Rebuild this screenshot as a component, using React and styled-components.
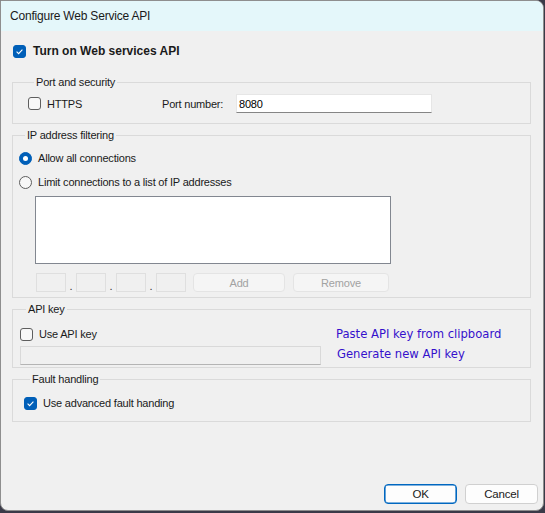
import React from "react";
import styled, { createGlobalStyle } from "styled-components";

const GlobalStyle = createGlobalStyle`
  html, body {
    margin: 0;
    padding: 0;
  }
  body {
    background: #3a3a48;
    font-family: "Liberation Sans", Arial, sans-serif;
    color: #1a1a1a;
  }
`;

const Window = styled.div`
  width: 544px;
  height: 511px;
  box-sizing: border-box;
  background: #f0f0f0;
  border: 1px solid #8e8e8e;
  border-radius: 0 8px 8px 8px;
  display: flex;
  flex-direction: column;
  overflow: hidden;
`;

const TitleBar = styled.div`
  height: 30px;
  flex: none;
  display: flex;
  align-items: center;
  padding-left: 9px;
  background: #e4f7fa;
  font-size: 12px;
  letter-spacing: -0.2px;
  color: #1a1a1a;
`;

const Body = styled.div`
  padding: 0 12px 0 11px;
  font-size: 11px;
  letter-spacing: -0.2px;
`;

const Row = styled.label`
  display: flex;
  align-items: center;
  height: 16px;
  gap: ${(p) => p.$gap || 6}px;
`;

const MasterRow = styled(Row)`
  margin-top: 12px;
  padding-left: 1px;
  font-size: 12px;
  font-weight: bold;
  letter-spacing: 0;
`;

const Group = styled.fieldset`
  margin: ${(p) => p.$top || 4}px 0 0;
  border: 1px solid #dadada;
  padding: ${(p) => p.$pad};
  min-width: 0;
`;

const Legend = styled.legend`
  padding: 0 2px;
  margin-left: 6px;
  font-size: 11px;
  line-height: 14px;
`;

const BoxMark = styled.span`
  width: 13px;
  height: 13px;
  box-sizing: border-box;
  border-radius: 3px;
  flex: none;
  display: inline-flex;
  align-items: center;
  justify-content: center;
  background: ${(p) => (p.$checked ? "#005fb8" : "#f7f7f7")};
  border: 1px solid ${(p) => (p.$checked ? "#005fb8" : "#5e5e5e")};
`;

const RadioMark = styled.span`
  width: 13px;
  height: 13px;
  box-sizing: border-box;
  border-radius: 50%;
  flex: none;
  display: inline-flex;
  align-items: center;
  justify-content: center;
  background: ${(p) => (p.$checked ? "#005fb8" : "#f7f7f7")};
  border: 1px solid ${(p) => (p.$checked ? "#005fb8" : "#5e5e5e")};

  &::after {
    content: "";
    display: ${(p) => (p.$checked ? "block" : "none")};
    width: 5px;
    height: 5px;
    border-radius: 50%;
    background: #fff;
  }
`;

const Check = ({ checked }) => (
  <BoxMark $checked={checked}>
    {checked && (
      <svg width="9" height="9" viewBox="0 0 9 9">
        <path d="M1.6 4.7 L3.6 6.6 L7.4 2.6" fill="none" stroke="#fff" strokeWidth="1.1" />
      </svg>
    )}
  </BoxMark>
);

const PortRow = styled.div`
  display: flex;
  align-items: center;
  height: 19px;
`;

const HttpsLabel = styled(Row)`
  width: 134px;
`;

const FieldLabel = styled.span`
  width: 74px;
`;

const TextInput = styled.div`
  box-sizing: border-box;
  width: ${(p) => p.$w}px;
  height: 19px;
  display: flex;
  align-items: center;
  padding-left: 2px;
  background: ${(p) => (p.$disabled ? "#f0f0f0" : "#fff")};
  border: 1px solid ${(p) => (p.$disabled ? "#d9d9d9" : "#e6e6e6")};
  border-bottom-color: ${(p) => (p.$disabled ? "#b4b4b4" : "#858585")};
  font-size: 11px;
  color: #000;
`;

const RadioList = styled.div`
  display: flex;
  flex-direction: column;
  gap: 8px;
`;

const ListBox = styled.div`
  box-sizing: border-box;
  width: 356px;
  height: 68px;
  margin: 6px 0 0 16px;
  background: #fff;
  border: 1px solid #828790;
`;

const IpRow = styled.div`
  display: flex;
  align-items: stretch;
  height: 19px;
  margin: 9px 0 0 17px;
`;

const IpBox = styled.div`
  box-sizing: border-box;
  width: 30px;
  background: #f0f0f0;
  border: 1px solid #dfdfdf;
`;

const IpDot = styled.span`
  width: 10px;
  display: flex;
  align-items: flex-end;
  justify-content: center;
  line-height: 12px;
  font-size: 11px;
  color: #333;
`;

const DimButton = styled.div`
  box-sizing: border-box;
  width: ${(p) => p.$w}px;
  margin-left: ${(p) => p.$ml}px;
  display: flex;
  align-items: center;
  justify-content: center;
  background: #f5f5f5;
  border: 1px solid #e4e4e4;
  border-radius: 4px;
  color: #a2a2a2;
`;

const KeyLayout = styled.div`
  display: flex;
  gap: 15px;
`;

const KeyLeft = styled.div`
  display: flex;
  flex-direction: column;
  gap: 4px;
`;

const LinkColumn = styled.div`
  display: flex;
  flex-direction: column;
  gap: 4px;
`;

const Link = styled.span`
  height: 16px;
  display: flex;
  align-items: center;
  margin-left: ${(p) => p.$ml || 0}px;
  font-family: "DejaVu Sans", Verdana, sans-serif;
  font-size: 11.6px;
  letter-spacing: 0;
  color: #3510cc;
  cursor: pointer;
`;

const Footer = styled.div`
  margin-top: auto;
  display: flex;
  justify-content: flex-end;
  gap: 8px;
  padding: 0 5px 6px 0;
`;

const Button = styled.button`
  box-sizing: border-box;
  width: 73px;
  height: 20px;
  padding: 0;
  border-radius: 4px;
  background: #fdfdfd;
  border: 1px solid ${(p) => (p.$primary ? "#0067c0" : "#d0d0d0")};
  box-shadow: ${(p) => (p.$primary ? "inset 0 0 0 0.6px #0067c0" : "none")};
  font-family: "Liberation Sans", Arial, sans-serif;
  font-size: 11.5px;
  letter-spacing: -0.2px;
  color: #1a1a1a;
`;

export default function App() {
  return (
    <>
      <GlobalStyle />
      <Window>
        <TitleBar>Configure Web Service API</TitleBar>
        <Body>
          <MasterRow $gap={7}>
            <Check checked />
            Turn on Web services API
          </MasterRow>

          <Group $top={16} $pad="5px 0 10px 15px">
            <Legend>Port and security</Legend>
            <PortRow>
              <HttpsLabel>
                <Check />
                HTTPS
              </HttpsLabel>
              <FieldLabel>Port number:</FieldLabel>
              <TextInput $w={196}>8080</TextInput>
            </PortRow>
          </Group>

          <Group $pad="8px 0 5px 6px">
            <Legend>IP address filtering</Legend>
            <RadioList>
              <Row>
                <RadioMark $checked />
                Allow all connections
              </Row>
              <Row>
                <RadioMark />
                Limit connections to a list of IP addresses
              </Row>
            </RadioList>
            <ListBox />
            <IpRow>
              <IpBox />
              <IpDot>.</IpDot>
              <IpBox />
              <IpDot>.</IpDot>
              <IpBox />
              <IpDot>.</IpDot>
              <IpBox />
              <DimButton $w={92} $ml={7}>Add</DimButton>
              <DimButton $w={96} $ml={8}>Remove</DimButton>
            </IpRow>
          </Group>

          <Group $pad="10px 0 2px 7px">
            <Legend>API key</Legend>
            <KeyLayout>
              <KeyLeft>
                <Row>
                  <Check />
                  Use API key
                </Row>
                <TextInput $w={301} $disabled />
              </KeyLeft>
              <LinkColumn>
                <Link>Paste API key from clipboard</Link>
                <Link $ml={1}>Generate new API key</Link>
              </LinkColumn>
            </KeyLayout>
          </Group>

          <Group $pad="9px 0 10px 11px">
            <Legend>Fault handling</Legend>
            <Row>
              <Check checked />
              Use advanced fault handing
            </Row>
          </Group>
        </Body>
        <Footer>
          <Button $primary>OK</Button>
          <Button>Cancel</Button>
        </Footer>
      </Window>
    </>
  );
}
